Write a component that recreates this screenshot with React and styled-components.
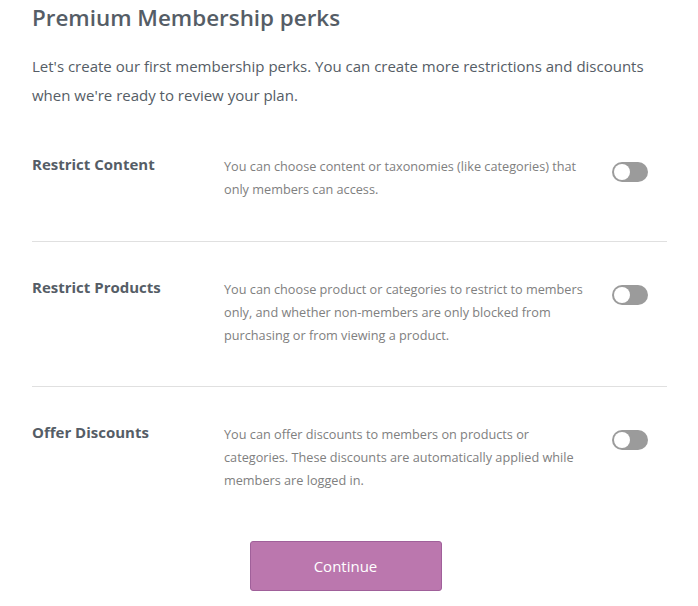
import styled, { createGlobalStyle } from "styled-components"
import { useState } from "react"

const GlobalStyles = createGlobalStyle`
  body {
    margin: 0;
    background: #fff;
    font-family: "Open Sans", "Noto Sans", sans-serif;
  }
`

const Pagina = styled.div`
  width: 635px;
  padding: 0 31px 0 32px;
`

const Titulo = styled.h1`
  margin: 0;
  padding-top: 3px;
  font-size: 22.4px;
  font-weight: 600;
  line-height: 30px;
  color: #555d66;
`

const Intro = styled.p`
  margin: 19px 0 0;
  font-size: 15px;
  line-height: 29px;
  color: #555d66;
`

const Lista = styled.div`
  margin-top: 44px;
`

const Fila = styled.div`
  display: flex;
  align-items: flex-start;
  padding: 35px 0 40px;
  border-bottom: ${p => (p.$ultima ? "none" : "1px solid #e0e0e0")};
  &:first-child {
    padding-top: 0;
  }
  &:nth-child(2) {
    padding-bottom: 39px;
  }
`

const Etiqueta = styled.h3`
  margin: 0;
  width: 192px;
  flex-shrink: 0;
  font-size: 15px;
  font-weight: 700;
  line-height: 20px;
  color: #555d66;
`

const Descripcion = styled.p`
  margin: 0;
  width: 365px;
  padding-top: 1px;
  font-size: 12.7px;
  line-height: 23px;
  color: #808080;
`

const Interruptor = styled.button`
  position: relative;
  margin: 8px 0 0 23px;
  width: 36px;
  height: 20px;
  padding: 0;
  border: none;
  border-radius: 10px;
  background: ${p => (p.$activo ? "#bb77ae" : "#9b9b9b")};
  cursor: pointer;
  &::after {
    content: "";
    position: absolute;
    top: 2px;
    left: ${p => (p.$activo ? "18px" : "2px")};
    width: 16px;
    height: 16px;
    border-radius: 50%;
    background: #fff;
  }
`

const Acciones = styled.div`
  display: flex;
  justify-content: center;
  padding-right: 8px;
  margin-top: 9px;
`

const Boton = styled.button`
  width: 192px;
  height: 50px;
  border: 1px solid #a0609a;
  border-radius: 3px;
  background: #bb77ae;
  color: #fff;
  font-family: "Open Sans", "Noto Sans", sans-serif;
  font-size: 15px;
  font-weight: 400;
  cursor: pointer;
`

const perks = [
  {
    id: "contenido",
    titulo: "Restrict Content",
    texto: "You can choose content or taxonomies (like categories) that only members can access.",
  },
  {
    id: "productos",
    titulo: "Restrict Products",
    texto: "You can choose product or categories to restrict to members only, and whether non-members are only blocked from purchasing or from viewing a product.",
  },
  {
    id: "descuentos",
    titulo: "Offer Discounts",
    texto: "You can offer discounts to members on products or categories. These discounts are automatically applied while members are logged in.",
  },
]

const App = () => {
  const [activos, setActivos] = useState({})

  const alternar = id => setActivos({ ...activos, [id]: !activos[id] })

  return (
    <>
      <GlobalStyles />
      <Pagina>
        <Titulo>Premium Membership perks</Titulo>
        <Intro>
          Let's create our first membership perks. You can create more restrictions and discounts when we're ready to review your plan.
        </Intro>
        <Lista>
          {perks.map((perk, i) => (
            <Fila key={perk.id} $ultima={i === perks.length - 1}>
              <Etiqueta>{perk.titulo}</Etiqueta>
              <Descripcion>{perk.texto}</Descripcion>
              <Interruptor $activo={activos[perk.id]} onClick={() => alternar(perk.id)} aria-label={perk.titulo} />
            </Fila>
          ))}
        </Lista>
        <Acciones>
          <Boton>Continue</Boton>
        </Acciones>
      </Pagina>
    </>
  )
}

export default App
